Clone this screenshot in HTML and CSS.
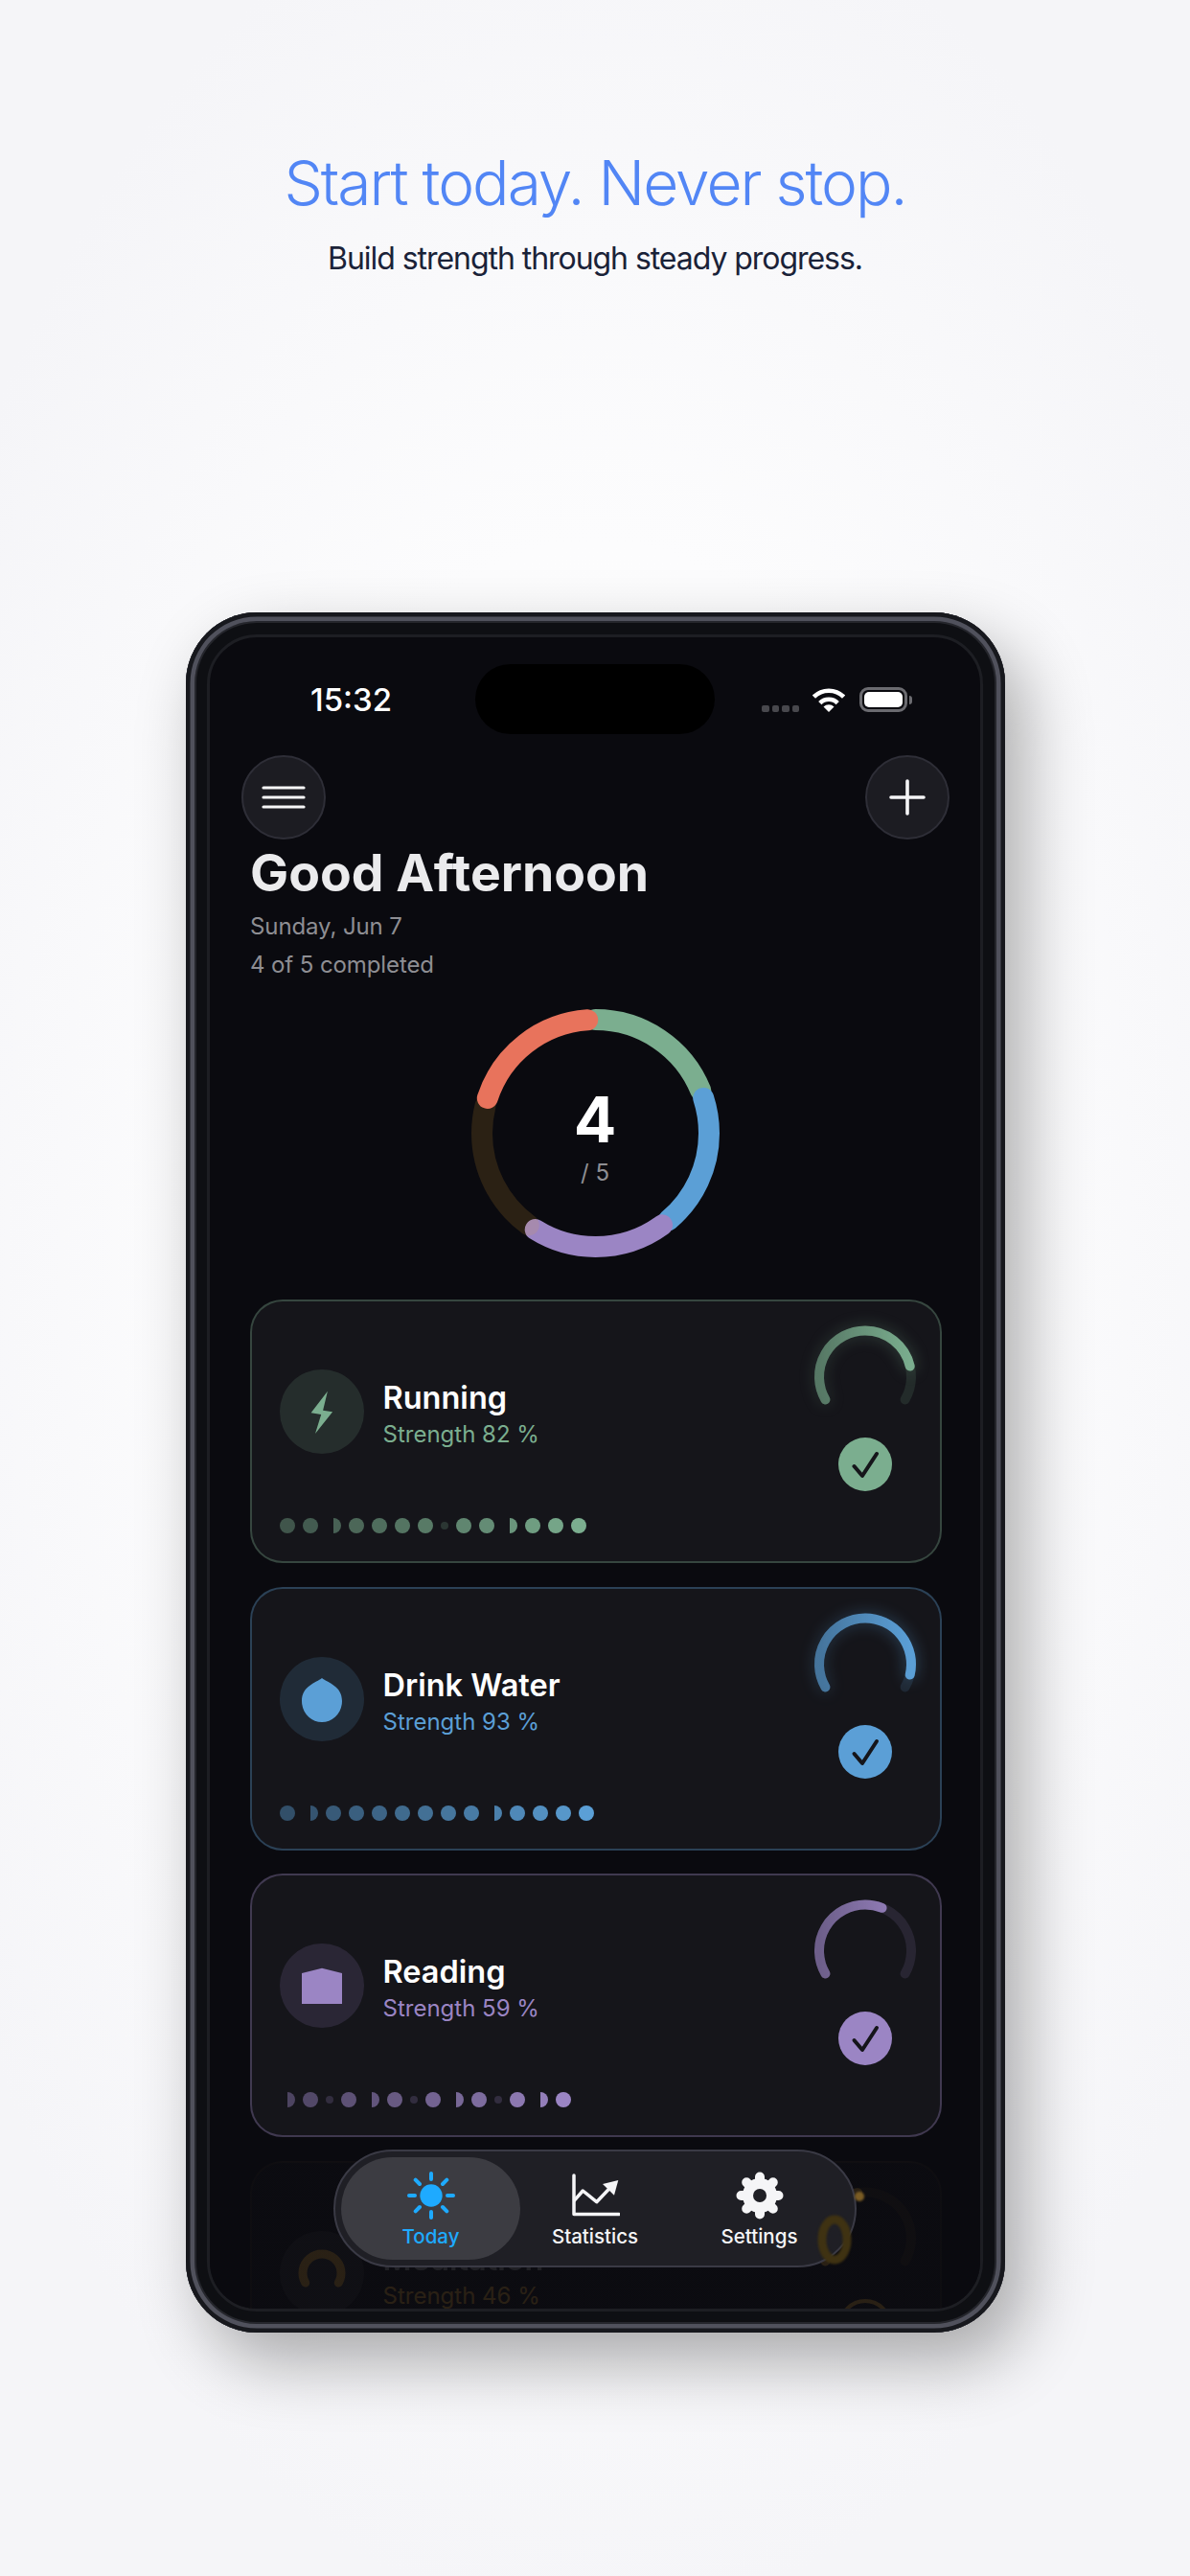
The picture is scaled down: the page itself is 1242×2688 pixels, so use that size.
FILE: index.html

```html
<!DOCTYPE html>
<html lang="en">
<head>
    <meta charset="UTF-8">
    <meta name="viewport" content="width=device-width, initial-scale=1.0">
    <title>Start today. Never stop.</title>
    <link rel="stylesheet" href="styles.css">
</head>
<body>
    <header class="hero">
        <h1>Start today. Never stop.</h1>
        <p>Build strength through steady progress.</p>
    </header>

    <div class="phone">
        <div class="screen">
            <div class="island"></div>

            <div class="status-bar">
                <span class="time">15:32</span>
                <div class="status-icons">
                    <div class="signal"><span></span><span></span><span></span><span></span></div>
                    <svg class="wifi" width="34" height="25" viewBox="0 0 34 25">
                        <path d="M1.4 9.2A22 22 0 0 1 32.6 9.2M7.8 15.6A13 13 0 0 1 26.2 15.6" fill="none" stroke="#fff" stroke-width="4.6"/>
                        <path d="M17 25L11.5 19.5A7.8 7.8 0 0 1 22.5 19.5Z" fill="#fff"/>
                    </svg>
                    <div class="battery"><span></span></div>
                    <div class="battery-nub"></div>
                </div>
            </div>

            <div class="top-buttons">
                <button class="round-btn">
                    <svg width="48" height="30" viewBox="0 0 48 30"><path d="M3 5H45M3 15H45M3 25H45" stroke="#f5f5f7" stroke-width="3.2" stroke-linecap="round"/></svg>
                </button>
                <button class="round-btn">
                    <svg width="40" height="40" viewBox="0 0 40 40"><path d="M20 3V37M3 20H37" stroke="#f5f5f7" stroke-width="3.6" stroke-linecap="round"/></svg>
                </button>
            </div>

            <div class="greeting">
                <h2>Good Afternoon</h2>
                <p class="date">Sunday, Jun 7</p>
                <p>4 of 5 completed</p>
            </div>

            <div class="ring">
                <svg width="259" height="259" viewBox="0 0 259 259">
                    <g transform="rotate(-90 129.5 129.5)" fill="none" stroke-width="22" stroke-linecap="round">
                        <circle cx="129.5" cy="129.5" r="118.5" pathLength="360" stroke="#7bae8f" stroke-dasharray="68 292"/>
                        <circle cx="129.5" cy="129.5" r="118.5" pathLength="360" stroke="#5b9fd6" stroke-dasharray="68 292" stroke-dashoffset="-72"/>
                        <circle cx="129.5" cy="129.5" r="118.5" pathLength="360" stroke="#9b85c4" stroke-dasharray="68 292" stroke-dashoffset="-144"/>
                        <circle cx="129.5" cy="129.5" r="118.5" pathLength="360" stroke="#e8a838" stroke-opacity="0.15" stroke-dasharray="68 292" stroke-dashoffset="-216"/>
                        <circle cx="129.5" cy="129.5" r="118.5" pathLength="360" stroke="#e8735c" stroke-dasharray="68 292" stroke-dashoffset="-288"/>
                    </g>
                </svg>
                <div class="ring-label">
                    <div class="ring-count">4</div>
                    <div class="ring-total">/ 5</div>
                </div>
            </div>

            <div class="cards">
                <div class="card card-green">
                    <div class="card-left">
                        <div class="habit">
                            <div class="habit-icon">
                                <svg width="52" height="52" viewBox="0 0 52 52"><polygon points="31.9,4.7 14.6,27.3 25.2,29 19,49 37.1,26.3 27.1,24.7"/></svg>
                            </div>
                            <div>
                                <div class="habit-name">Running</div>
                                <div class="habit-sub">Strength 82 %</div>
                            </div>
                        </div>
                        <div class="dots">
                            <span class="dot"></span><span class="dot"></span><span class="dot half"></span><span class="dot"></span><span class="dot"></span><span class="dot"></span><span class="dot"></span><span class="dot small"></span><span class="dot"></span><span class="dot"></span><span class="dot half"></span><span class="dot"></span><span class="dot"></span><span class="dot"></span>
                        </div>
                    </div>
                    <div class="card-right">
                        <svg class="gauge" width="120" height="100" viewBox="0 0 120 100">
                            <defs><linearGradient id="grad-green"><stop offset="0" stop-color="#7bae8f" stop-opacity="0.55"/><stop offset="1" stop-color="#7bae8f"/></linearGradient></defs>
                            <path class="gauge-track" d="M18.43 79.5A48 48 0 1 1 101.57 79.5"/>
                            <path class="gauge-fill" d="M18.43 79.5A48 48 0 1 1 101.57 79.5" pathLength="100" stroke-dasharray="82 100" stroke="url(#grad-green)"/>
                        </svg>
                        <div class="check">
                            <svg width="56" height="56" viewBox="0 0 56 56"><path d="M16.5 30L25 40L40 17" fill="none" stroke="#15151a" stroke-width="4" stroke-linecap="round" stroke-linejoin="round"/></svg>
                        </div>
                    </div>
                </div>

                <div class="card card-blue">
                    <div class="card-left">
                        <div class="habit">
                            <div class="habit-icon">
                                <svg width="52" height="52" viewBox="0 0 52 52"><path d="M26 4C32 9 47 12 47 28C47 41 37 50 26 50C15 50 5 41 5 28C5 12 20 9 26 4Z"/></svg>
                            </div>
                            <div>
                                <div class="habit-name">Drink Water</div>
                                <div class="habit-sub">Strength 93 %</div>
                            </div>
                        </div>
                        <div class="dots">
                            <span class="dot"></span><span class="dot half"></span><span class="dot"></span><span class="dot"></span><span class="dot"></span><span class="dot"></span><span class="dot"></span><span class="dot"></span><span class="dot"></span><span class="dot half"></span><span class="dot"></span><span class="dot"></span><span class="dot"></span><span class="dot"></span>
                        </div>
                    </div>
                    <div class="card-right">
                        <svg class="gauge" width="120" height="100" viewBox="0 0 120 100">
                            <defs><linearGradient id="grad-blue"><stop offset="0" stop-color="#5b9fd6" stop-opacity="0.6"/><stop offset="1" stop-color="#5b9fd6"/></linearGradient></defs>
                            <path class="gauge-track" d="M18.43 79.5A48 48 0 1 1 101.57 79.5"/>
                            <path class="gauge-fill" d="M18.43 79.5A48 48 0 1 1 101.57 79.5" pathLength="100" stroke-dasharray="93 100" stroke="url(#grad-blue)"/>
                        </svg>
                        <div class="check">
                            <svg width="56" height="56" viewBox="0 0 56 56"><path d="M16.5 30L25 40L40 17" fill="none" stroke="#15151a" stroke-width="4" stroke-linecap="round" stroke-linejoin="round"/></svg>
                        </div>
                    </div>
                </div>

                <div class="card card-purple">
                    <div class="card-left">
                        <div class="habit">
                            <div class="habit-icon">
                                <svg width="52" height="52" viewBox="0 0 52 52"><polygon points="26,7.7 47,13 47,45 5,45 5,13"/></svg>
                            </div>
                            <div>
                                <div class="habit-name">Reading</div>
                                <div class="habit-sub">Strength 59 %</div>
                            </div>
                        </div>
                        <div class="dots">
                            <span class="dot half"></span><span class="dot"></span><span class="dot small"></span><span class="dot"></span><span class="dot half"></span><span class="dot"></span><span class="dot small"></span><span class="dot"></span><span class="dot half"></span><span class="dot"></span><span class="dot small"></span><span class="dot"></span><span class="dot half"></span><span class="dot"></span>
                        </div>
                    </div>
                    <div class="card-right">
                        <svg class="gauge" width="120" height="100" viewBox="0 0 120 100">
                            <defs><linearGradient id="grad-purple"><stop offset="0" stop-color="#9b85c4" stop-opacity="0.6"/><stop offset="1" stop-color="#9b85c4"/></linearGradient></defs>
                            <path class="gauge-track" d="M18.43 79.5A48 48 0 1 1 101.57 79.5"/>
                            <path class="gauge-fill" d="M18.43 79.5A48 48 0 1 1 101.57 79.5" pathLength="100" stroke-dasharray="59 100" stroke="url(#grad-purple)"/>
                        </svg>
                        <div class="check">
                            <svg width="56" height="56" viewBox="0 0 56 56"><path d="M16.5 30L25 40L40 17" fill="none" stroke="#15151a" stroke-width="4" stroke-linecap="round" stroke-linejoin="round"/></svg>
                        </div>
                    </div>
                </div>

                <div class="card card-orange">
                    <div class="card-left">
                        <div class="habit">
                            <div class="habit-icon">
                                <svg width="52" height="52" viewBox="0 0 52 52"><path d="M8.7 36A20 20 0 1 1 43.3 36" fill="none" stroke="#e8a838" stroke-width="9" stroke-linecap="round"/></svg>
                            </div>
                            <div>
                                <div class="habit-name">Meditation</div>
                                <div class="habit-sub">Strength 46 %</div>
                            </div>
                        </div>
                    </div>
                    <div class="card-right">
                        <svg class="gauge" width="120" height="100" viewBox="0 0 120 100">
                            <path class="gauge-track" d="M18.43 79.5A48 48 0 1 1 101.57 79.5"/>
                            <path class="gauge-fill" d="M18.43 79.5A48 48 0 1 1 101.57 79.5" pathLength="100" stroke-dasharray="46 100" stroke="#e8a838"/>
                        </svg>
                        <div class="check check-open"></div>
                    </div>
                </div>
            </div>

            <div class="fade"></div>

            <nav class="tabbar">
                <svg class="lens" width="60" height="90" viewBox="0 0 60 90">
                    <ellipse cx="20" cy="48" rx="13" ry="21" fill="none" stroke="#3f3212" stroke-width="9"/>
                    <circle cx="46" cy="3" r="5" fill="#7a5c24"/>
                </svg>
                <div class="tab tab-active">
                    <svg width="52" height="52" viewBox="0 0 52 52">
                        <circle cx="26" cy="26" r="11.7" fill="#1eaaff"/>
                        <g stroke="#1eaaff" stroke-width="4" stroke-linecap="round">
                            <path d="M26 3V9M26 43V49M3 26H9M43 26H49M9.7 9.7L14 14M38 38L42.3 42.3M9.7 42.3L14 38M38 14L42.3 9.7"/>
                        </g>
                    </svg>
                    <span>Today</span>
                </div>
                <div class="tab">
                    <svg width="52" height="52" viewBox="0 0 52 52">
                        <path d="M4 5V45.5H51" fill="none" stroke="#f5f5f7" stroke-width="3.5" stroke-linecap="round" stroke-linejoin="round"/>
                        <path d="M4 31.7L13.3 21L27.7 32.7L41.7 18" fill="none" stroke="#f5f5f7" stroke-width="3.5" stroke-linejoin="round"/>
                        <polygon points="50.3,10 34,14 46,25.7" fill="#f5f5f7"/>
                    </svg>
                    <span>Statistics</span>
                </div>
                <div class="tab">
                    <svg width="52" height="52" viewBox="0 0 52 52">
                        <g stroke="#f5f5f7" stroke-width="10" stroke-linecap="round">
                            <path d="M26 6.5V45.5M6.5 26H45.5M12.2 12.2L39.8 39.8M12.2 39.8L39.8 12.2"/>
                        </g>
                        <circle cx="26" cy="26" r="18" fill="#f5f5f7"/>
                        <circle cx="26" cy="26" r="7" fill="#1f1f25"/>
                    </svg>
                    <span>Settings</span>
                </div>
            </nav>
        </div>
    </div>
</body>
</html>
```

FILE: styles.css

```css
* {
    box-sizing: border-box;
}
body {
    margin: 0;
    width: 1242px;
    height: 2688px;
    overflow: hidden;
    font-family: Inter, "Liberation Sans", sans-serif;
    background: radial-gradient(ellipse 780px 1450px at 50% 48%, #fefefe 0%, #fcfcfd 50%, #f5f5f8 100%), #f5f5f8;
}
h1, h2, p {
    margin: 0;
}

.hero {
    padding-top: 153px;
    text-align: center;
}
.hero h1 {
    font-size: 64px;
    line-height: 76px;
    font-weight: 350;
    letter-spacing: -2px;
    color: #5286f5;
}
.hero p {
    margin-top: 20.5px;
    font-size: 32px;
    line-height: 40px;
    letter-spacing: -1.05px;
    color: #1a2238;
}

.phone {
    width: 855px;
    height: 1795px;
    margin: 349.5px 0 0 194px;
    padding: 23px 23px 22px 22px;
    border-radius: 74px;
    background: #0e0f13;
    box-shadow:
        inset 0 0 0 4.5px #17181d,
        inset 0 0 0 9px #50515c,
        inset 0 0 0 11px #25262c,
        20px 30px 70px rgba(0, 0, 0, 0.32);
}
.screen {
    position: relative;
    height: 100%;
    overflow: hidden;
    border: 3px solid #1d1e23;
    border-radius: 52px;
    background: #0a0a0f;
    color: #fff;
}
.island {
    position: absolute;
    top: 28px;
    left: 277px;
    width: 250px;
    height: 73px;
    border-radius: 37px;
    background: #000;
}

.status-bar {
    display: flex;
    justify-content: space-between;
    align-items: center;
    height: 100px;
    padding: 30px 71px 0 105px;
}
.time {
    font-size: 33px;
    font-weight: 500;
}
.status-icons {
    display: flex;
    align-items: flex-end;
}
.signal {
    display: flex;
    gap: 3px;
    margin-right: 14px;
}
.signal span {
    width: 7.5px;
    height: 7px;
    border-radius: 2px;
    background: #48484d;
}
.wifi {
    margin-right: 15px;
}
.battery {
    width: 50px;
    height: 26px;
    padding: 2px;
    border: 3px solid #6b6b70;
    border-radius: 9px;
}
.battery span {
    display: block;
    height: 100%;
    border-radius: 5px;
    background: #fff;
}
.battery-nub {
    width: 3px;
    height: 9px;
    margin: 0 0 8px 2px;
    border-radius: 0 3px 3px 0;
    background: #6b6b70;
}

.top-buttons {
    display: flex;
    justify-content: space-between;
    margin-top: 23px;
    padding: 0 32px 0 33px;
}
.round-btn {
    display: flex;
    align-items: center;
    justify-content: center;
    width: 88px;
    height: 88px;
    padding: 0;
    border: 2px solid #2e2e37;
    border-radius: 50%;
    background: #1c1c22;
}

.greeting {
    padding: 5px 42px 0;
    font-size: 24px;
    line-height: 40px;
    letter-spacing: -0.1px;
    color: #8e8e93;
}
.greeting h2 {
    font-size: 53.5px;
    line-height: 60px;
    font-weight: 700;
    letter-spacing: 0;
    color: #ebebed;
}
.greeting .date {
    margin-top: 6px;
}

.ring {
    display: grid;
    place-items: center;
    width: 259px;
    margin: 26px auto 0;
}
.ring svg, .ring-label {
    grid-area: 1 / 1;
}
.ring-label {
    margin-top: 7px;
    text-align: center;
}
.ring-count {
    font-size: 66px;
    line-height: 70px;
    font-weight: 700;
}
.ring-total {
    margin-top: 6px;
    font-size: 24px;
    line-height: 30px;
    color: #8e8e93;
}

.cards {
    display: flex;
    flex-direction: column;
    gap: 24.5px;
    margin-top: 44px;
    padding: 0 40px 0 42px;
}
.card {
    flex: none;
    display: flex;
    justify-content: space-between;
    height: 275px;
    padding: 23px 18px 0 29px;
    border: 2px solid var(--edge);
    border-radius: 34px;
    background: #15151a;
}
.card-green {
    --accent: #7bae8f;
    --soft: rgba(123, 174, 143, 0.16);
    --edge: rgba(123, 174, 143, 0.32);
    --glow: rgba(123, 174, 143, 0.35);
}
.card-blue {
    --accent: #5b9fd6;
    --soft: rgba(91, 159, 214, 0.16);
    --edge: rgba(91, 159, 214, 0.32);
    --glow: rgba(91, 159, 214, 0.4);
}
.card-purple {
    --accent: #9b85c4;
    --soft: rgba(155, 133, 196, 0.16);
    --edge: rgba(155, 133, 196, 0.32);
    --glow: transparent;
}
.card-orange {
    --accent: #e8a838;
    --soft: rgba(255, 255, 255, 0.12);
    --edge: rgba(232, 168, 56, 0.1);
    --glow: transparent;
}
.card-orange .habit-name {
    opacity: 0.6;
}

.habit {
    display: flex;
    align-items: center;
    gap: 19.5px;
    margin-top: 48px;
}
.habit-icon {
    display: flex;
    align-items: center;
    justify-content: center;
    width: 88px;
    height: 88px;
    border-radius: 50%;
    background: var(--soft);
    fill: var(--accent);
}
.habit-name {
    margin-top: 6px;
    font-size: 32.5px;
    line-height: 38px;
    font-weight: 600;
}
.habit-sub {
    margin-top: 4px;
    font-size: 24px;
    line-height: 30px;
    color: var(--accent);
}

.dots {
    display: flex;
    align-items: center;
    gap: 8px;
    height: 16px;
    margin-top: 67px;
}
.dot {
    width: 16px;
    height: 16px;
    border-radius: 50%;
    background: var(--accent);
}
.dots span:nth-child(1) { opacity: 0.42; }
.dots span:nth-child(2) { opacity: 0.46; }
.dots span:nth-child(3) { opacity: 0.5; }
.dots span:nth-child(4) { opacity: 0.54; }
.dots span:nth-child(5) { opacity: 0.58; }
.dots span:nth-child(6) { opacity: 0.62; }
.dots span:nth-child(7) { opacity: 0.66; }
.dots span:nth-child(8) { opacity: 0.7; }
.dots span:nth-child(9) { opacity: 0.74; }
.dots span:nth-child(10) { opacity: 0.78; }
.dots span:nth-child(11) { opacity: 0.84; }
.dots span:nth-child(12) { opacity: 0.89; }
.dots span:nth-child(13) { opacity: 0.94; }
.dots span:nth-child(14) { opacity: 1; }
.dots .half {
    width: 8px;
    margin-left: 8px;
    border-radius: 0 8px 8px 0;
}
.dots span.small {
    width: 8px;
    height: 8px;
    opacity: 0.22;
}

.card-right {
    display: flex;
    flex-direction: column;
    align-items: center;
    width: 120px;
}
.gauge {
    overflow: visible;
    fill: none;
}
.gauge-track {
    stroke: var(--accent);
    stroke-opacity: 0.14;
    stroke-width: 10;
    stroke-linecap: round;
}
.gauge-fill {
    stroke-width: 10;
    stroke-linecap: round;
    filter: drop-shadow(0 0 8px var(--glow));
}
.check {
    display: flex;
    width: 56px;
    height: 56px;
    margin-top: 19px;
    border-radius: 50%;
    background: var(--accent);
}
.check-open {
    border: 4px solid var(--accent);
    background: none;
}

.fade {
    position: absolute;
    left: 0;
    right: 0;
    bottom: 0;
    height: 181px;
    background: linear-gradient(rgba(10, 10, 15, 0), rgba(10, 10, 15, 0.86) 30px);
}

.tabbar {
    position: absolute;
    top: 1578px;
    left: 129px;
    display: grid;
    grid-template-columns: 187px 156px 1fr;
    width: 546px;
    height: 123px;
    padding: 6px;
    border: 2px solid #3a3a45;
    border-radius: 62px;
    background: #1f1f25;
}
.lens {
    position: absolute;
    top: 44px;
    left: 501px;
    overflow: visible;
    filter: blur(1px);
}
.tab {
    display: flex;
    flex-direction: column;
    align-items: center;
    padding-top: 14px;
    border-radius: 54px;
    font-size: 20.5px;
    line-height: 24px;
    font-weight: 500;
    color: #f5f5f7;
}
.tab span {
    margin-top: 5px;
}
.tab-active {
    background: #3c3c42;
    color: #1eaaff;
}
```
